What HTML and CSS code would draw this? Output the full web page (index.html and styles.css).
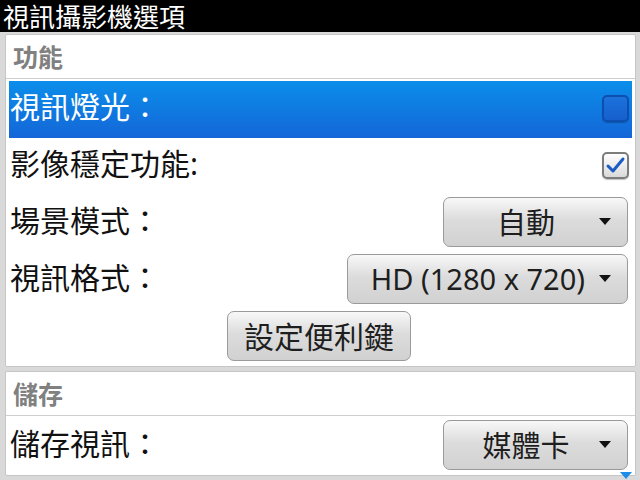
FILE: index.html
```html
<!DOCTYPE html>
<html lang="zh-Hant">
<head>
  <meta charset="UTF-8">
  <title>視訊攝影機選項</title>
  <link rel="stylesheet" href="styles.css">
</head>
<body>
  <div class="titlebar">視訊攝影機選項</div>

  <!-- Features -->
  <div class="panel">
    <div class="section-head">功能</div>
    <div class="list">
      <div class="row selected">
        <span class="label">視訊燈光：</span>
        <span class="checkbox"></span>
      </div>
      <div class="row">
        <span class="label">影像穩定功能:</span>
        <span class="checkbox checked">
          <svg width="23" height="23" viewBox="0 0 23 23"><path d="M4 12 L9 17 L19 5" fill="none" stroke="#1a5cc4" stroke-width="3" stroke-linecap="round" stroke-linejoin="round"/></svg>
        </span>
      </div>
      <div class="row">
        <span class="label">場景模式：</span>
        <div class="button select"><span class="value">自動</span><span class="arrow"></span></div>
      </div>
      <div class="row">
        <span class="label">視訊格式：</span>
        <div class="button select"><span class="value">HD (1280 x 720)</span><span class="arrow"></span></div>
      </div>
      <div class="row center">
        <div class="button">設定便利鍵</div>
      </div>
    </div>
  </div>

  <!-- Storage -->
  <div class="panel second">
    <div class="section-head">儲存</div>
    <div class="list">
      <div class="row">
        <span class="label">儲存視訊：</span>
        <div class="button select"><span class="value">媒體卡</span><span class="arrow"></span></div>
      </div>
    </div>
  </div>

  <div class="scroll-down"></div>
</body>
</html>
```

FILE: styles.css
```css
body {
  margin: 0;
  height: 480px;
  overflow: hidden;
  background-color: #d9d9d9;
  font-family: "Noto Sans", "Noto Sans CJK TC", sans-serif;
  position: relative;
}
.titlebar {
  height: 32px;
  line-height: 32px;
  background-color: #000;
  color: #fff;
  font-family: "Noto Sans CJK TC", sans-serif;
  font-size: 26px;
  padding-left: 3px;
  white-space: nowrap;
}
/* White grouped panels */
.panel {
  margin: 2px 4px 0 5px;
  background-color: #fff;
  border: 1px solid #c6c6c6;
  border-radius: 2px;
}
.panel.second {
  margin-top: 4px;
}
.section-head {
  height: 43px;
  line-height: 42px;
  border-bottom: 1px solid #cfcfcf;
  padding-left: 7px;
  font-family: "Noto Sans CJK TC", sans-serif;
  font-size: 25px;
  font-weight: bold;
  color: #808080;
}
.list {
  padding: 2px 3px 0 3px;
}
.row {
  height: 57px;
  display: flex;
  align-items: center;
  justify-content: space-between;
  padding: 0 3px 0 1px;
  font-size: 30px;
  color: #111;
}
.row .label {
  padding-bottom: 9px;
}
.row.center {
  justify-content: center;
}
.row.selected {
  background: linear-gradient(#0b8eea, #1466d8);
  color: #fff;
}
/* Checkboxes */
.checkbox {
  width: 23px;
  height: 23px;
  border: 2px solid #0d4fae;
  border-radius: 5px;
  background: linear-gradient(#1c72dc, #165fcc);
  box-shadow: 0 1px 1px rgba(0, 0, 0, 0.25);
  margin-bottom: 2px;
}
.checkbox.checked {
  border-color: #7c7c7c;
  background: linear-gradient(#ffffff, #d9d9d9);
}
.checkbox svg {
  display: block;
}
/* Push buttons and drop-downs */
.button {
  box-sizing: border-box;
  height: 50px;
  display: flex;
  align-items: center;
  justify-content: center;
  padding: 0 16px 3px 16px;
  border: 1px solid #9a9a9a;
  border-radius: 7px;
  background: linear-gradient(#f8f8f8, #dcdcdc 45%, #d1d1d1);
  color: #1e1e1e;
  font-size: 30px;
  margin: 0 1px 3px 0;
}
.button.select {
  min-width: 185px;
  padding: 0 16px 2px 23px;
  gap: 14px;
}
.button.select .value {
  flex: 1;
  text-align: center;
  font-size: 29px;
}
.arrow {
  width: 0;
  height: 0;
  border-left: 6px solid transparent;
  border-right: 6px solid transparent;
  border-top: 7px solid #111;
}
/* More-below indicator */
.scroll-down {
  position: absolute;
  right: 8px;
  bottom: 1px;
  width: 0;
  height: 0;
  border-left: 6px solid transparent;
  border-right: 6px solid transparent;
  border-top: 7px solid #1c8ce8;
}
```
